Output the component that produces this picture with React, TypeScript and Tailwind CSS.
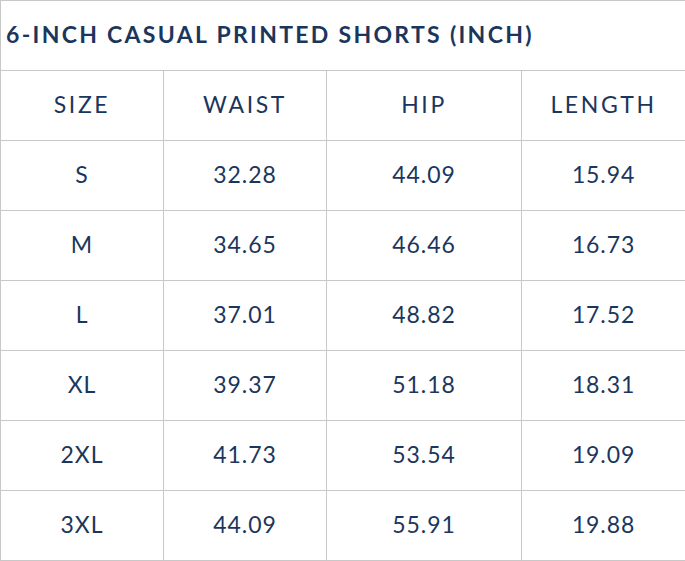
import React from 'react';

const rows = [
  ['S', '32.28', '44.09', '15.94'],
  ['M', '34.65', '46.46', '16.73'],
  ['L', '37.01', '48.82', '17.52'],
  ['XL', '39.37', '51.18', '18.31'],
  ['2XL', '41.73', '53.54', '19.09'],
  ['3XL', '44.09', '55.91', '19.88'],
];

const headers = ['SIZE', 'WAIST', 'HIP', 'LENGTH'];

export default function App() {
  return (
    <div className="w-[685px] h-[561px] bg-white text-[#1b365d]" style={{ fontFamily: 'Lato, "Open Sans", sans-serif' }}>
      <table className="w-[685px] border-collapse table-fixed">
        <colgroup>
          <col className="w-[163px]" />
          <col className="w-[163px]" />
          <col className="w-[195px]" />
          <col className="w-[164px]" />
        </colgroup>
        <thead>
          <tr className="h-[70px]">
            <th colSpan={4} className="border border-[#c8c8c8] text-left pl-[5px] pb-[3px] text-[23px] font-bold tracking-[2.3px]">
              6-INCH CASUAL PRINTED SHORTS (INCH)
            </th>
          </tr>
          <tr className="h-[70px]">
            {headers.map((h) => (
              <th key={h} className="border border-[#c8c8c8] text-center pb-[3px] text-[23px] font-normal tracking-[2.6px]">
                {h}
              </th>
            ))}
          </tr>
        </thead>
        <tbody>
          {rows.map((r) => (
            <tr key={r[0]} className="h-[70px]">
              {r.map((c, i) => (
                <td key={i} className="border border-[#c8c8c8] text-center pb-[3px] text-[23px] tracking-[0.9px]">
                  {c}
                </td>
              ))}
            </tr>
          ))}
        </tbody>
      </table>
    </div>
  );
}
